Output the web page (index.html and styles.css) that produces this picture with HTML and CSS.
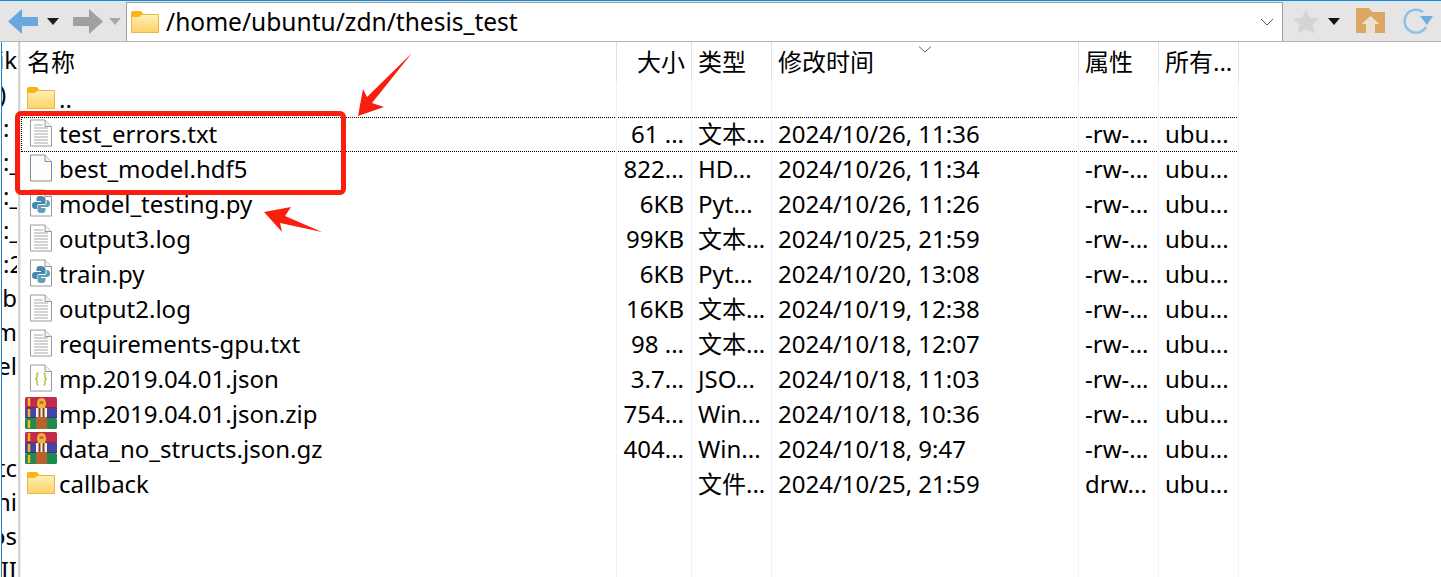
FILE: index.html
```html
<!DOCTYPE html>
<html lang="zh">
<head>
<meta charset="utf-8">
<title>thesis_test</title>
<link rel="stylesheet" href="styles.css">
</head>
<body>
<svg class="defs" width="0" height="0" aria-hidden="true">
  <defs>
    <linearGradient id="fold" x1="0" y1="0" x2="0" y2="1"><stop offset="0" stop-color="#fff3c4"/><stop offset="1" stop-color="#fdd365"/></linearGradient>
    <symbol id="i-folder" viewBox="0 0 28 22">
      <path d="M0.5 21.5V2Q0.5 0.5 2 0.5H9.5L12.5 3.5H27.5V21.5Z" fill="url(#fold)" stroke="#e9b64a"/>
      <path d="M0 6V2Q0 0 2 0H10L13 4H10L8 6Z" fill="#fbb516"/>
    </symbol>
    <symbol id="i-doc" viewBox="0 0 24 28">
      <path d="M1.5 1H16L22.5 7.5V27H1.5Z" fill="#fff" stroke="#9a9a9a"/><path d="M16 1V7.5H22.5" fill="#f2f2f2" stroke="#9a9a9a"/>
      <path d="M5 6H14M5 9H19M5 12H19M5 15H19M5 18H19M5 21H19M5 24H19" stroke="#a8a8a8" stroke-width="1.2"/>
    </symbol>
    <symbol id="i-blank" viewBox="0 0 24 28">
      <path d="M1.5 1H16L22.5 7.5V27H1.5Z" fill="#fdfdfd" stroke="#8c8c8c"/><path d="M16 1V7.5H22.5" fill="#f2f2f2" stroke="#8c8c8c"/>
    </symbol>
    <symbol id="i-py" viewBox="0 0 24 28">
      <path d="M1.5 1H16L22.5 7.5V27H1.5Z" fill="#fff" stroke="#9a9a9a"/><path d="M16 1V7.5H22.5" fill="#f2f2f2" stroke="#9a9a9a"/>
      <path d="M11.5 7C8 7 7.5 8.5 7.5 10V12H12V13H6C4 13 3 14.5 3 16.5S4 20 6 20H8V17.5C8 15.500 9.500 15 11 15H15C16 15 16.500 14.500 16.500 13.500V10C16.500 8 15 7 11.500 7Z" fill="#4a87ad"/>
      <path d="M12.500 24C16 24 16.500 22.500 16.500 21V19H12V18H18C20 18 21 16.500 21 14.500S20 11 18 11H17.500V13.500C17.500 15.500 16 16 14.500 16H10C9 16 8.500 16.500 8.500 17.500V21C8.500 23 9 24 12.500 24Z" fill="#5f9dbb"/>
    </symbol>
    <symbol id="i-json" viewBox="0 0 24 28">
      <path d="M1.5 1H16L22.5 7.5V27H1.5Z" fill="#fff" stroke="#9a9a9a"/><path d="M16 1V7.5H22.5" fill="#f2f2f2" stroke="#9a9a9a"/>
      <path d="M9.500 9C7.500 9 8 11 8 13S6 15 6 15 8 15 8 17 7.500 21 9.500 21M14.500 9C16.500 9 16 11 16 13S18 15 18 15 16 15 16 17 16.500 21 14.500 21" fill="none" stroke="#b9c04a" stroke-width="1.500"/>
    </symbol>
    <symbol id="i-rar" viewBox="0 0 32 32">
      <rect x="0" y="0" width="32" height="11" rx="1.500" fill="#c22b4c"/>
      <rect x="0" y="11" width="32" height="10" fill="#4642a6"/>
      <rect x="0" y="21" width="32" height="11" rx="1.500" fill="#1f8a50"/>
      <path d="M0 10.500H32M0 20.500H32" stroke="#222" stroke-width="1" opacity=".35"/>
      <path d="M4 1V9M4 12V20M4 23V31" stroke="#f4b81f" stroke-width="2.500"/>
      <rect x="11" y="20" width="11" height="12" fill="#b5622e"/>
      <rect x="11" y="11" width="11" height="9" fill="#f5f2ea"/>
      <path d="M14.500 11V20M18.500 11V20" stroke="#80401f" stroke-width="2"/>
      <path d="M13 11L12 7Q12 1 16.500 1T21 7L20 11Z" fill="#f4b434"/><rect x="14.500" y="4" width="4" height="3" fill="#c07a1e"/>
    </symbol>
  </defs>
</svg>

<header class="toolbar">
  <div class="nav">
    <svg class="nav-arrow" width="30" height="25" viewBox="0 0 30 25"><path d="M0 12.500L14 0V8H30V17H14V25Z" fill="#6aa7dc"/></svg>
    <svg class="caret" width="12" height="7" viewBox="0 0 12 7"><path d="M0 0H12L6 7Z" fill="#1c1c1c"/></svg>
    <svg class="nav-arrow fwd" width="30" height="25" viewBox="0 0 30 25"><path d="M30 12.500L16 0V8H0V17H16V25Z" fill="#a0a0a0"/></svg>
    <svg class="caret" width="12" height="7" viewBox="0 0 12 7"><path d="M0 0H12L6 7Z" fill="#a8a8a8"/></svg>
  </div>
  <div class="address">
    <svg class="addr-icon" width="28" height="22"><use href="#i-folder"/></svg>
    <span class="path">/home/ubuntu/zdn/thesis_test</span>
    <svg class="chev" width="14" height="8" viewBox="0 0 14 8"><path d="M1 1L7 7L13 1" fill="none" stroke="#555" stroke-width="1"/></svg>
  </div>
  <div class="tools">
    <svg width="26" height="25" viewBox="0 0 26 25"><path d="M13 0L17 8.500L26 9.500L19.500 15.500L21.500 24.500L13 20L4.500 24.500L6.500 15.500L0 9.500L9 8.500Z" fill="#d4d4d4"/></svg>
    <svg class="caret tool-caret" width="12" height="7" viewBox="0 0 12 7"><path d="M0 0H12L6 7Z" fill="#111"/></svg>
    <svg class="home" width="29" height="26" viewBox="0 0 29 26"><path d="M0 25V0H13L16 4H29V25H19V16H23L14.500 8L6 16H10V25Z" fill="#dba662"/><path d="M10 25V16H6L14.500 8L23 16H19V25Z" fill="#eadfd0"/></svg>
    <svg class="reload" width="31" height="28" viewBox="0 0 31 28"><path d="M24 20A11.500 11.500 0 1 1 21 5" fill="none" stroke="#90c0e6" stroke-width="2.500"/><path d="M18 9H31L25 18Z" fill="#6fb0e2"/></svg>
  </div>
</header>

<main class="body">
  <aside class="tree">
    <div class="tree-row">ik</div>
    <div class="tree-row from-left clip">)</div>
    <div class="tree-row from-left">:</div>
    <div class="tree-row from-left">:_</div>
    <div class="tree-row from-left">:_</div>
    <div class="tree-row from-left">:_</div>
    <div class="tree-row from-left">:2</div>
    <div class="tree-row">ab</div>
    <div class="tree-row">m</div>
    <div class="tree-row">el</div>
    <div class="tree-row"></div>
    <div class="tree-row"></div>
    <div class="tree-row">ntc</div>
    <div class="tree-row">ni</div>
    <div class="tree-row">os</div>
    <div class="tree-row">VII</div>
  </aside>
  <div class="splitter"></div>
  <section class="list">
    <div class="row head">
      <div class="c name">名称</div><div class="c size">大小</div><div class="c type">类型</div>
      <div class="c time">修改时间<svg class="sort" width="14" height="7" viewBox="0 0 14 7"><path d="M1 0.500L7 6L13 0.500" fill="none" stroke="#666"/></svg></div>
      <div class="c attr">属性</div><div class="c owner">所有...</div>
    </div>
    <div class="row">
      <div class="c name"><svg class="ic" width="28" height="22"><use href="#i-folder"/></svg><span class="nm">..</span></div><div class="c size"></div><div class="c type"></div><div class="c time"></div><div class="c attr"></div><div class="c owner"></div>
    </div>
    <div class="row focus">
      <div class="c name"><svg class="ic" width="24" height="28"><use href="#i-doc"/></svg><span class="nm">test_errors.txt</span></div><div class="c size">61 ...</div><div class="c type">文本...</div><div class="c time">2024/10/26, 11:36</div><div class="c attr">-rw-...</div><div class="c owner">ubu...</div>
    </div>
    <div class="row">
      <div class="c name"><svg class="ic" width="24" height="28"><use href="#i-blank"/></svg><span class="nm">best_model.hdf5</span></div><div class="c size">822...</div><div class="c type">HD...</div><div class="c time">2024/10/26, 11:34</div><div class="c attr">-rw-...</div><div class="c owner">ubu...</div>
    </div>
    <div class="row">
      <div class="c name"><svg class="ic" width="24" height="28"><use href="#i-py"/></svg><span class="nm">model_testing.py</span></div><div class="c size">6KB</div><div class="c type">Pyt...</div><div class="c time">2024/10/26, 11:26</div><div class="c attr">-rw-...</div><div class="c owner">ubu...</div>
    </div>
    <div class="row">
      <div class="c name"><svg class="ic" width="24" height="28"><use href="#i-doc"/></svg><span class="nm">output3.log</span></div><div class="c size">99KB</div><div class="c type">文本...</div><div class="c time">2024/10/25, 21:59</div><div class="c attr">-rw-...</div><div class="c owner">ubu...</div>
    </div>
    <div class="row">
      <div class="c name"><svg class="ic" width="24" height="28"><use href="#i-py"/></svg><span class="nm">train.py</span></div><div class="c size">6KB</div><div class="c type">Pyt...</div><div class="c time">2024/10/20, 13:08</div><div class="c attr">-rw-...</div><div class="c owner">ubu...</div>
    </div>
    <div class="row">
      <div class="c name"><svg class="ic" width="24" height="28"><use href="#i-doc"/></svg><span class="nm">output2.log</span></div><div class="c size">16KB</div><div class="c type">文本...</div><div class="c time">2024/10/19, 12:38</div><div class="c attr">-rw-...</div><div class="c owner">ubu...</div>
    </div>
    <div class="row">
      <div class="c name"><svg class="ic" width="24" height="28"><use href="#i-doc"/></svg><span class="nm">requirements-gpu.txt</span></div><div class="c size">98 ...</div><div class="c type">文本...</div><div class="c time">2024/10/18, 12:07</div><div class="c attr">-rw-...</div><div class="c owner">ubu...</div>
    </div>
    <div class="row">
      <div class="c name"><svg class="ic" width="24" height="28"><use href="#i-json"/></svg><span class="nm">mp.2019.04.01.json</span></div><div class="c size">3.7...</div><div class="c type">JSO...</div><div class="c time">2024/10/18, 11:03</div><div class="c attr">-rw-...</div><div class="c owner">ubu...</div>
    </div>
    <div class="row">
      <div class="c name"><svg class="ic rar" width="32" height="32"><use href="#i-rar"/></svg><span class="nm">mp.2019.04.01.json.zip</span></div><div class="c size">754...</div><div class="c type">Win...</div><div class="c time">2024/10/18, 10:36</div><div class="c attr">-rw-...</div><div class="c owner">ubu...</div>
    </div>
    <div class="row">
      <div class="c name"><svg class="ic rar" width="32" height="32"><use href="#i-rar"/></svg><span class="nm">data_no_structs.json.gz</span></div><div class="c size">404...</div><div class="c type">Win...</div><div class="c time">2024/10/18, 9:47</div><div class="c attr">-rw-...</div><div class="c owner">ubu...</div>
    </div>
    <div class="row">
      <div class="c name"><svg class="ic" width="28" height="22"><use href="#i-folder"/></svg><span class="nm">callback</span></div><div class="c size"></div><div class="c type">文件...</div><div class="c time">2024/10/25, 21:59</div><div class="c attr">drw...</div><div class="c owner">ubu...</div>
    </div>
    <div class="row fill">
      <div class="c name"></div><div class="c size"></div><div class="c type"></div><div class="c time"></div><div class="c attr"></div><div class="c owner"></div>
    </div>
  </section>
</main>

<div class="redbox"></div>
<svg class="marks" width="1441" height="577" viewBox="0 0 1441 577">
  <path d="M412 53L372 103L384 107L358 116L363 89L367 97Z" fill="#fa1e0f"/>
  <path d="M264 212L291 207L285 216L322 232L280 223L282 232Z" fill="#fa1e0f"/>
</svg>
</body>
</html>
```
FILE: styles.css
```css
html, body { margin: 0; padding: 0; }
body {
  width: 1441px;
  height: 577px;
  overflow: hidden;
  background: #fff;
  color: #000;
  font-family: "Noto Sans", "Noto Sans CJK SC", sans-serif;
  font-size: 24px;
  display: flex;
  flex-direction: column;
  position: relative;
}
.defs { position: absolute; }
svg { display: block; flex: none; }

.toolbar {
  height: 42px;
  flex: none;
  box-sizing: border-box;
  display: flex;
  background: #e5e5e5;
  border-top: 1px solid #0a8be0;
  border-bottom: 1px solid #b4b4b4;
}
.nav {
  width: 126px;
  flex: none;
  display: flex;
  align-items: center;
  padding: 0 0 0 8px;
  box-sizing: border-box;
}
.nav .caret { margin-left: 9px; }
.nav .fwd { margin-left: 14px; }
.nav .fwd + .caret { margin-left: 6px; }
.address {
  width: 1157px;
  flex: none;
  box-sizing: border-box;
  background: #fff;
  border: 1px solid #a0a0a0;
  border-bottom: 0;
  margin-top: 1px;
  display: flex;
  align-items: center;
  padding: 0 6px 0 4px;
}
.addr-icon { margin-right: 7px; }
.path { flex: 1; white-space: nowrap; line-height: 32px; font-size: 24.55px; }
.chev { margin-right: 2px; }
.tools { display: flex; align-items: center; padding-left: 10px; }
.tool-caret { margin-left: 9px; }
.home { margin-left: 16px; }
.reload { margin-left: 17px; }

.body { flex: 1; display: flex; min-height: 0; }
.tree {
  width: 16px;
  flex: none;
  box-sizing: border-box;
  border-left: 1px solid #2a7fc0;
  margin-left: 1px;
  overflow: hidden;
  padding-top: 1px;
}
.tree-row {
  height: 34px;
  line-height: 34px;
  display: flex;
  justify-content: flex-end;
  white-space: nowrap;
  overflow: hidden;
}
.tree-row.from-left { justify-content: flex-start; padding-left: 1px; }
.tree-row.clip { margin-left: -4px; }
.splitter { flex: none; background: #d4d4d4; border-right: 1px solid #ededed; width: 2px; margin-left: 1px; }

.list { flex: none; width: 1218px; display: flex; flex-direction: column; height: 100%; }
.row {
  display: grid;
  grid-template-columns: 596px 75px 80px 307px 80px 80px;
  grid-template-rows: minmax(0, 1fr);
  height: 35px;
  flex: none;
}
.row.head { height: 40px; }
.row.fill { flex: 1; }
.c {
  box-sizing: border-box;
  border-right: 1px solid #eef3fb;
  white-space: nowrap;
  overflow: hidden;
  line-height: 33px;
  padding: 0 0 2px 6px;
  display: flex;
  align-items: center;
  position: relative;
}
.head .c { border-right-color: #e2e2e2; }
.c.size { justify-content: flex-end; padding: 0 7px 2px 0; }
.head .c.size { padding-right: 6px; }
.c.name { overflow: visible; }
.ic { width: 28px; margin: 0 4px 2px 0; }
.ic.rar { margin: 0 2px 2px -2px; width: 32px; }
.focus { outline: 1px dotted #000; outline-offset: -1px; }
.sort { position: absolute; left: 146px; top: 4px; }

.redbox {
  position: absolute;
  left: 15px;
  top: 111px;
  width: 331px;
  height: 84px;
  box-sizing: border-box;
  border: 5px solid #fa1e0f;
  border-radius: 6px;
}
.marks { position: absolute; left: 0; top: 0; pointer-events: none; }
```
